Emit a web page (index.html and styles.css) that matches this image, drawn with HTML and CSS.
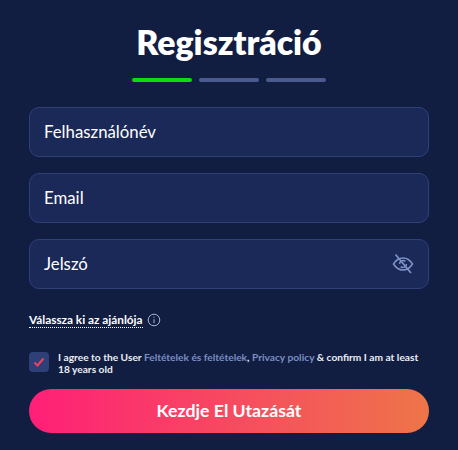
FILE: index.html
```html
<!DOCTYPE html>
<html lang="hu">
<head>
    <meta charset="UTF-8">
    <meta name="viewport" content="width=device-width, initial-scale=1.0">
    <title>Regisztráció</title>
    <link rel="stylesheet" href="styles.css">
</head>
<body>
    <div class="container">
        <h2>Regisztráció</h2>
        <div class="steps">
            <span class="step active"></span>
            <span class="step"></span>
            <span class="step"></span>
        </div>

        <div class="field"><span>Felhasználónév</span></div>
        <div class="field"><span>Email</span></div>
        <div class="field">
            <span>Jelszó</span>
            <svg class="eye" width="22" height="22" viewBox="0 0 22 22" fill="none" stroke="#7f93c8" stroke-width="1.5">
                <path d="M1.500 11C4 7 7.200 5 11 5s7 2 9.500 6c-2.500 4-5.700 6-9.500 6s-7-2-9.500-6z"/>
                <path d="M7.500 11a3.500 3.500 0 0 1 5.800-2.600M14.500 11a3.500 3.500 0 0 1-5.800 2.600"/>
                <path d="M3.500 1.500l15.500 18.500" stroke-width="1.700"/>
            </svg>
        </div>

        <div class="referrer">
            <span class="referrer-link">Válassza ki az ajánlója</span>
            <svg width="14" height="14" viewBox="0 0 14 14" fill="none" stroke="#a9b4d4" stroke-width="1">
                <circle cx="7" cy="7" r="5.800"/>
                <path d="M7 6.200v4M7 3.700v1.100"/>
            </svg>
        </div>

        <div class="agree">
            <div class="checkbox">
                <svg width="12" height="10" viewBox="0 0 12 10" fill="none" stroke="#f0405e" stroke-width="2">
                    <path d="M1.500 5.500l3 3 6-7"/>
                </svg>
            </div>
            <p>I agree to the User <a href="#">Feltételek és feltételek</a>, <a href="#">Privacy policy</a> &amp; confirm I am at least<br>18 years old</p>
        </div>

        <button>Kezdje El Utazását</button>
    </div>
</body>
</html>
```
FILE: styles.css
```css
body {
    background-color: #111e42;
    color: #ffffff;
    font-family: Lato, "Open Sans", sans-serif;
    margin: 0;
}
.container {
    width: 400px;
    margin: 0 auto;
    padding-top: 21px;
}
h2 {
    font-size: 33.800px;
    line-height: 42px;
    font-weight: 800;
    text-align: center;
    margin: 0;
}
.steps {
    display: flex;
    justify-content: center;
    gap: 7px;
    margin-top: 15px;
    margin-bottom: 25px;
}
.step {
    width: 60px;
    height: 4px;
    border-radius: 2px;
    background-color: #4a5c8f;
}
.step.active {
    background-color: #0fdc0f;
}
.field {
    display: flex;
    align-items: center;
    justify-content: space-between;
    box-sizing: border-box;
    height: 50px;
    margin-bottom: 16px;
    padding: 0 14px 2px;
    background-color: #1a2958;
    border: 1px solid #2f4079;
    border-radius: 10px;
    font-size: 16.800px;
}
.eye {
    margin-top: 1px;
}
.referrer {
    display: flex;
    align-items: center;
    gap: 4px;
    margin-top: 23px;
    font-size: 11.800px;
    font-weight: 700;
}
.referrer-link {
    border-bottom: 1px dotted #ffffff;
}
.agree {
    display: flex;
    gap: 9px;
    margin-top: 24px;
}
.checkbox {
    display: flex;
    align-items: center;
    justify-content: center;
    flex-shrink: 0;
    width: 20px;
    height: 20px;
    background-color: #2f4079;
    border-radius: 4px;
}
.agree p {
    margin: 0;
    font-size: 10.200px;
    line-height: 11.500px;
    font-weight: 700;
    color: #eceef5;
}
.agree a {
    color: #7a8ec4;
    text-decoration: none;
}
button {
    display: block;
    width: 100%;
    height: 44px;
    margin-top: 14px;
    padding-bottom: 3px;
    border: none;
    border-radius: 22px;
    background: linear-gradient(90deg, #ff1f78, #ee7548);
    color: #ffffff;
    font-family: inherit;
    font-size: 17.700px;
    font-weight: 700;
}
```
